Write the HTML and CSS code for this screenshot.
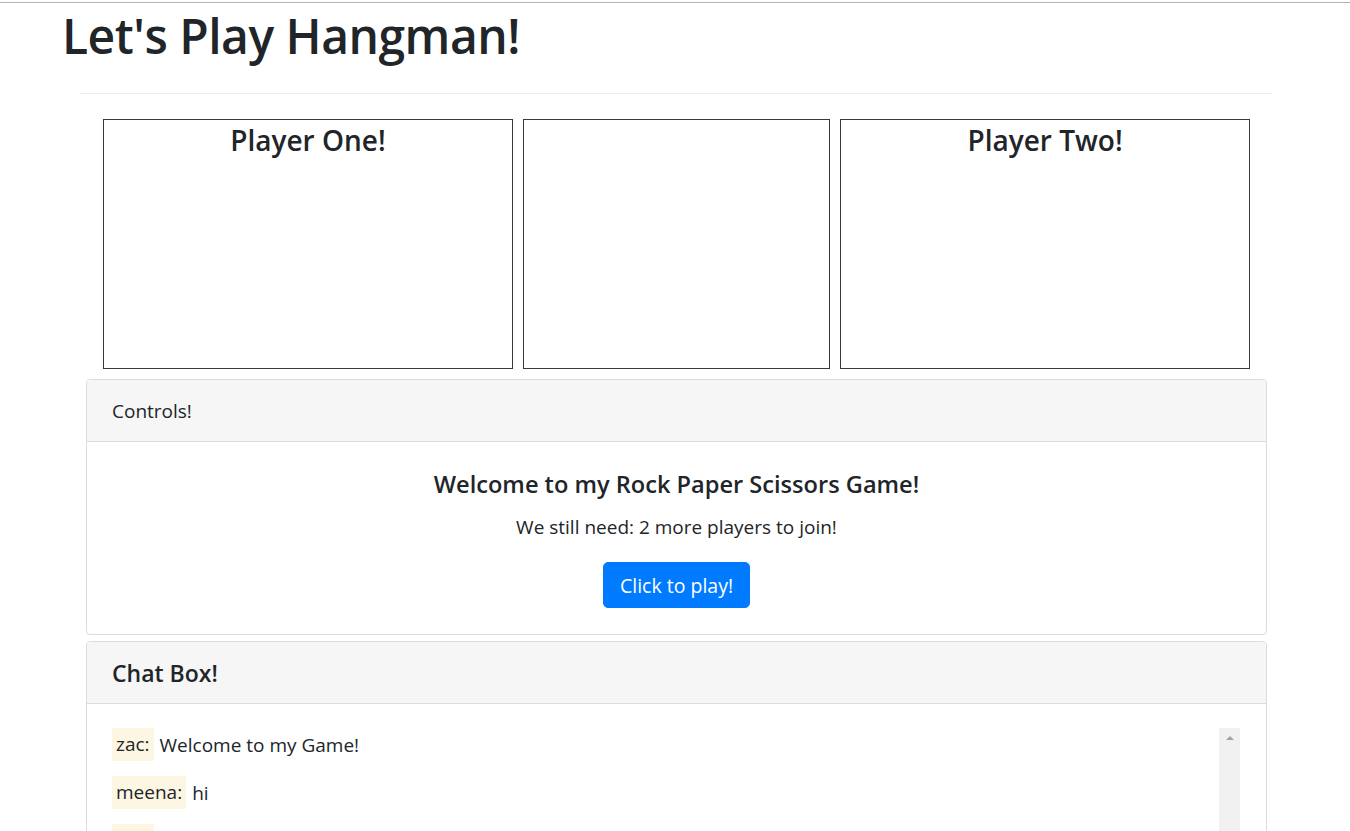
FILE: index.html
```html
<!DOCTYPE html>
<html lang="en">
<head>
<meta charset="utf-8">
<title>Let's Play Hangman!</title>
<link rel="stylesheet" href="styles.css">
</head>
<body>
<div class="topline"></div>
<header class="page-header">
  <h1 class="title">Let's Play Hangman!</h1>
</header>
<hr class="divider">
<main class="main">
  <section class="players">
    <div class="player-box"><h3 class="player-name">Player One!</h3></div>
    <div class="player-box"></div>
    <div class="player-box"><h3 class="player-name">Player Two!</h3></div>
  </section>

  <section class="card">
    <div class="card-header"><span class="controls-label">Controls!</span></div>
    <div class="card-body controls-body">
      <h4 class="welcome">Welcome to my Rock Paper Scissors Game!</h4>
      <p class="need">We still need: 2 more players to join!</p>
      <button class="btn-play" type="button">Click to play!</button>
    </div>
  </section>

  <section class="card chat-card">
    <div class="card-header"><h4 class="chat-title">Chat Box!</h4></div>
    <div class="card-body chat-body">
      <div class="chat-list">
        <div class="msg"><span class="name">zac:</span><span class="text">Welcome to my Game!</span></div>
        <div class="msg"><span class="name">meena:</span><span class="text">hi</span></div>
        <div class="msg"><span class="name">zac:</span><span class="text">hello</span></div>
      </div>
      <div class="scrollbar"><span class="arrow"></span></div>
    </div>
  </section>
</main>
</body>
</html>
```
FILE: styles.css
```css
html, body {
  margin: 0;
  padding: 0;
  background: #fff;
  overflow: hidden;
}
body {
  font-family: "Open Sans", "Noto Sans", "Liberation Sans", sans-serif;
  color: #212529;
  height: 831px;
}
.topline {
  margin-top: 2px;
  border-top: 1px solid #b4b4b4;
}
.page-header {
  padding-left: 62px;
}
.title {
  margin: 0;
  font-size: 48px;
  font-weight: 600;
  line-height: 66px;
  letter-spacing: -0.5px;
}
.divider {
  margin: 24px 78px 0 80px;
  border: 0;
  border-top: 1px solid #e9ecef;
}
.main {
  margin: 0 83px 0 86px;
  display: flex;
  flex-direction: column;
}
.players {
  display: grid;
  grid-template-columns: 4fr 3fr 4fr;
  gap: 10px;
  padding: 25px 17px 10px;
}
.player-box {
  height: 248px;
  border: 1px solid #343a40;
  text-align: center;
}
.player-name {
  margin: 0;
  padding-top: 2px;
  font-size: 28px;
  font-weight: 600;
  line-height: 36px;
}
.card {
  border: 1px solid #dcdcdc;
  border-radius: 4px;
  overflow: hidden;
}
.chat-card {
  margin-top: 6px;
}
.card-header {
  height: 61px;
  background: #f6f6f6;
  border-bottom: 1px solid #dcdcdc;
  display: flex;
  align-items: center;
  padding: 0 25px;
}
.controls-label {
  font-size: 19px;
}
.chat-title {
  margin: 0;
  font-size: 23px;
  font-weight: 600;
}
.controls-body {
  text-align: center;
  padding: 28px 20px 26px;
}
.welcome {
  margin: 0;
  font-size: 23.6px;
  font-weight: 600;
  line-height: 29px;
}
.need {
  margin: 15px 0 21px;
  font-size: 19px;
  line-height: 27px;
}
.btn-play {
  height: 46px;
  padding: 0 16px;
  font-family: inherit;
  font-size: 19.5px;
  color: #fff;
  background: #007bff;
  border: 1px solid #007bff;
  border-radius: 5px;
}
.chat-body {
  display: flex;
  padding: 24px 26px 0 25px;
  height: 110px;
}
.chat-list {
  flex: 1;
  display: flex;
  flex-direction: column;
  gap: 15px;
}
.msg {
  display: flex;
  align-items: center;
  gap: 6px;
  font-size: 19px;
}
.name {
  background: #fcf6e3;
  padding: 0 4px;
  line-height: 33px;
}
.scrollbar {
  width: 21px;
  background: #f1f1f1;
  display: flex;
  justify-content: center;
  padding-top: 8px;
  box-sizing: border-box;
}
.arrow {
  width: 0;
  height: 0;
  border-left: 4px solid transparent;
  border-right: 4px solid transparent;
  border-bottom: 4px solid #a3a3a3;
}
```
